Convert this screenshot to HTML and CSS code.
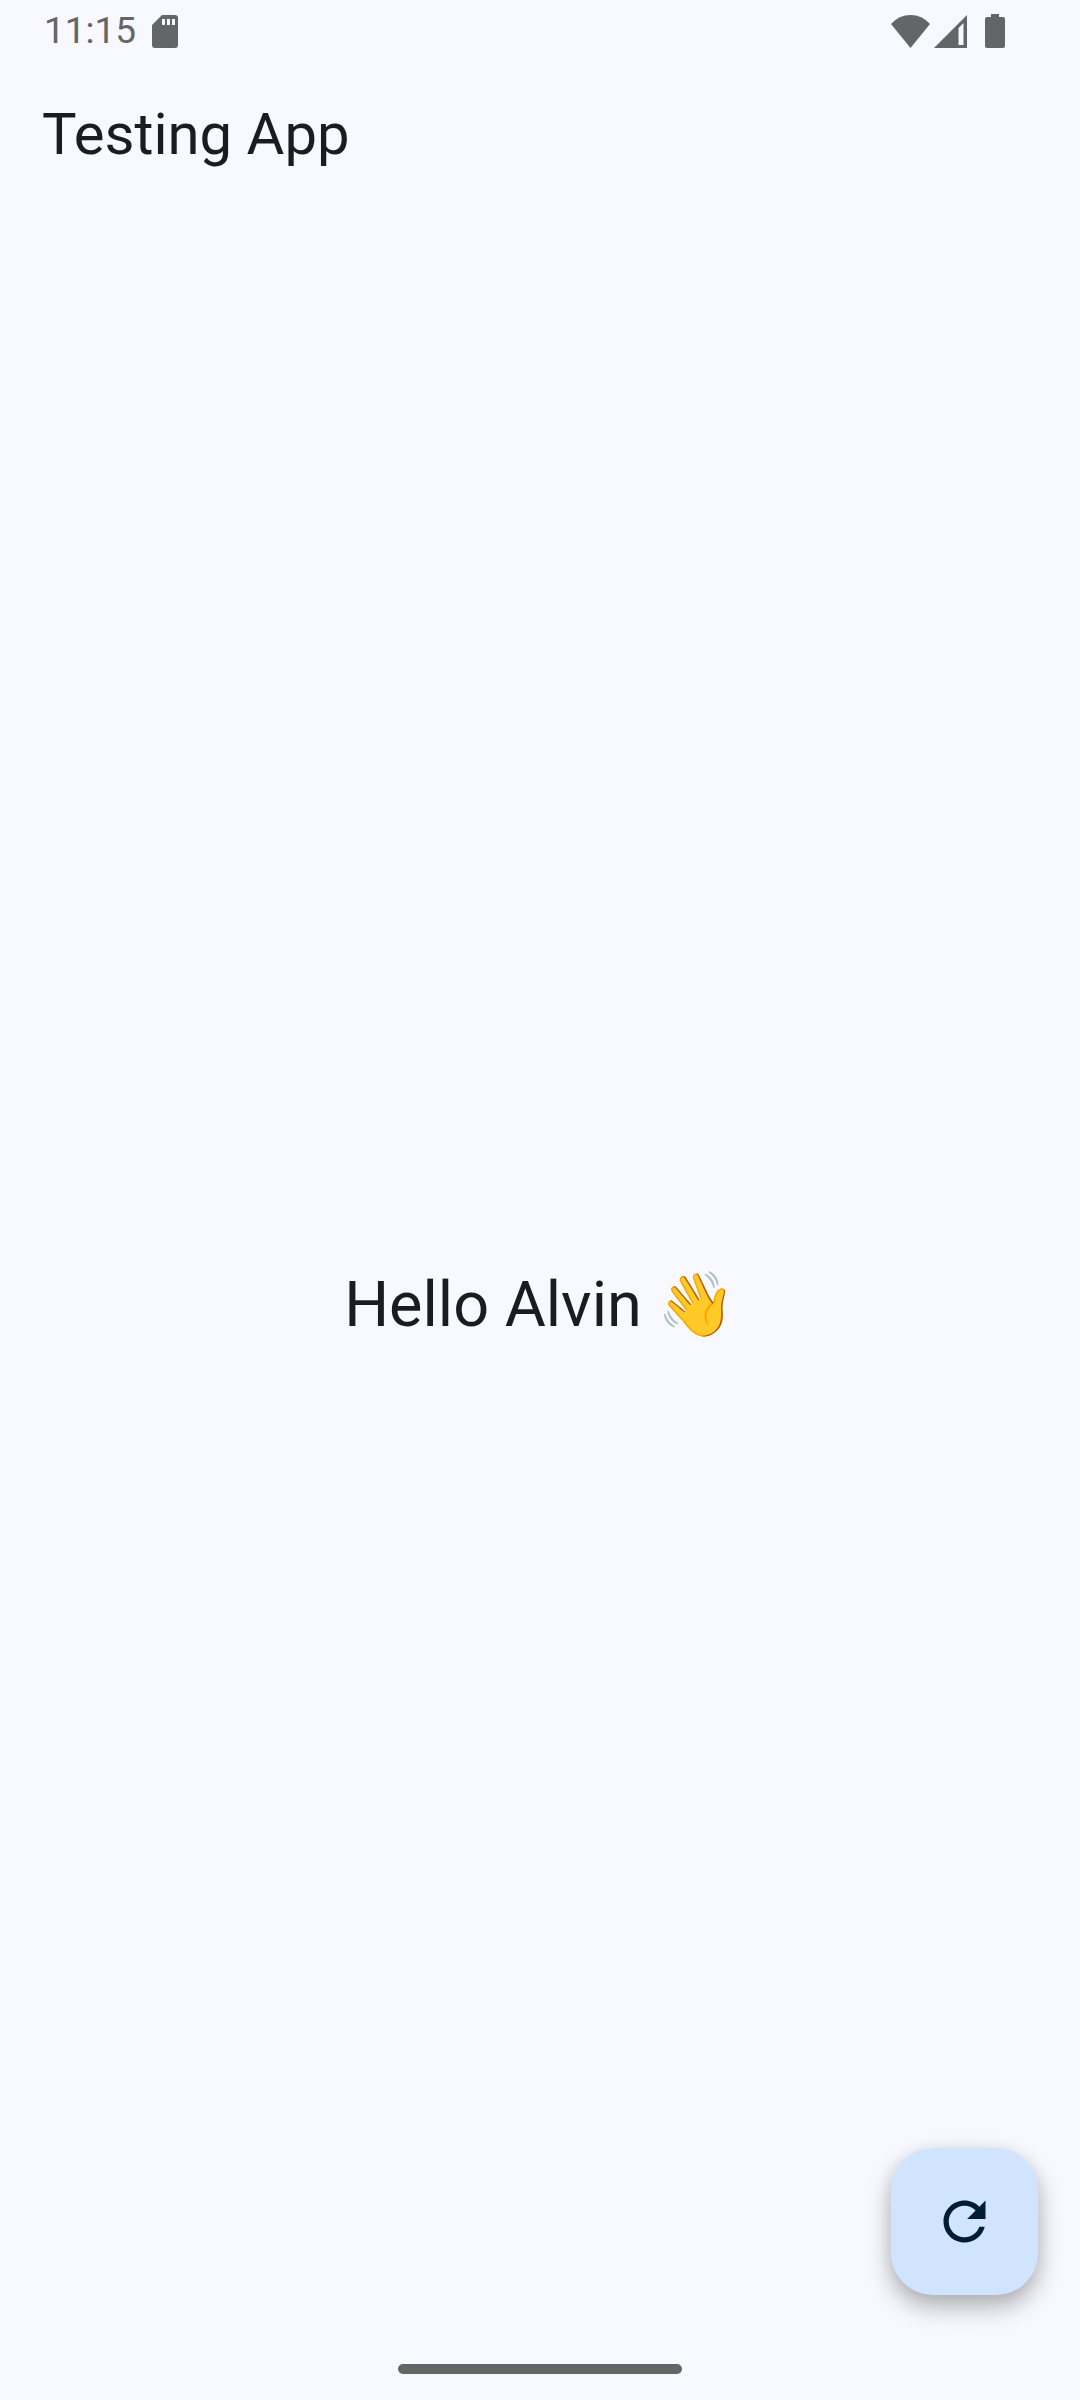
FILE: index.html
```html
<!DOCTYPE html>
<html lang="en">
<head>
<meta charset="utf-8">
<meta name="viewport" content="width=device-width, initial-scale=1">
<title>Testing App</title>
<link rel="stylesheet" href="styles.css">
</head>
<body class="screen">
  <div class="status-bar">
    <div class="status-group">
      <time class="clock">11:15</time>
      <svg class="icon-sd" viewBox="0 0 26 33" aria-hidden="true"><path fill-rule="evenodd" d="M10 0H23Q26 0 26 3V30Q26 33 23 33H3Q0 33 0 30V10ZM10 4V10H13V4ZM15 4V10H18V4ZM20 4V10H23V4Z"/></svg>
    </div>
    <div class="status-group status-right">
      <svg class="icon-wifi" viewBox="0 0 39 33" aria-hidden="true"><path d="M0 9Q8 0 19.500 0T39 9L19.500 33Z"/></svg>
      <svg class="icon-signal" viewBox="0 0 33 33" aria-hidden="true"><path fill-rule="evenodd" d="M0 33L33 0V33ZM24.500 13V30H29.500V8Z"/></svg>
      <svg class="icon-battery" viewBox="0 0 20 34" aria-hidden="true"><path d="M6 0H14V3H18Q20 3 20 5V32Q20 34 18 34H2Q0 34 0 32V5Q0 3 2 3H6Z"/></svg>
    </div>
  </div>
  <header class="app-bar">
    <h1 class="title">Testing App</h1>
  </header>
  <main class="content">
    <p class="greeting">Hello Alvin <span class="wave">👋</span></p>
  </main>
  <button class="fab" type="button" aria-label="Refresh">
    <svg class="icon-refresh" viewBox="0 0 24 24" aria-hidden="true"><path d="M17.650 6.350C16.200 4.900 14.210 4 12 4c-4.420 0-7.990 3.580-7.990 8s3.570 8 7.990 8c3.730 0 6.840-2.550 7.730-6h-2.080c-.82 2.330-3.040 4-5.650 4-3.310 0-6-2.690-6-6s2.690-6 6-6c1.660 0 3.140.69 4.220 1.780L13 11h7V4l-2.350 2.350z"/></svg>
  </button>
  <div class="gesture-bar"></div>
</body>
</html>
```
FILE: styles.css
```css
* {
  box-sizing: border-box;
}

.screen {
  margin: 0;
  min-height: 100vh;
  display: flex;
  flex-direction: column;
  background: #f8f9ff;
  color: #191c20;
  font-family: Roboto, "Noto Color Emoji", sans-serif;
}

.status-bar {
  height: 62px;
  padding: 0 75px 0 44px;
  display: flex;
  justify-content: space-between;
  align-items: center;
  color: #646566;
}

.status-bar svg {
  display: block;
  fill: currentColor;
}

.status-group {
  display: flex;
  align-items: center;
  gap: 16px;
}

.status-right {
  gap: 4px;
}

.clock {
  font-size: 37px;
  line-height: 62px;
}

.icon-sd {
  width: 26px;
  height: 33px;
}

.icon-wifi {
  width: 39px;
  height: 33px;
}

.icon-signal {
  width: 33px;
  height: 33px;
}

.icon-battery {
  width: 20px;
  height: 34px;
  margin-left: 14px;
}

.app-bar {
  height: 148px;
  padding: 0 42px 4px;
  display: flex;
  align-items: center;
}

.title {
  margin: 0;
  font-size: 58px;
  font-weight: 400;
  line-height: 74px;
}

.content {
  flex: 1;
  display: flex;
  align-items: center;
  justify-content: center;
}

.greeting {
  margin: 0;
  font-size: 63px;
  line-height: 74px;
}

.fab {
  position: fixed;
  right: 42px;
  bottom: 105px;
  width: 147px;
  height: 147px;
  padding: 0;
  display: grid;
  place-items: center;
  border: 0;
  border-radius: 42px;
  background: #d1e4ff;
  color: #001d36;
  box-shadow: 0 12px 24px rgba(0, 0, 0, 0.28), 0 2px 20px rgba(0, 0, 0, 0.08);
}

.icon-refresh {
  width: 63px;
  height: 63px;
  fill: currentColor;
}

.gesture-bar {
  position: fixed;
  bottom: 26px;
  left: 50%;
  width: 284px;
  height: 10px;
  border-radius: 5px;
  background: #646566;
  transform: translateX(-50%);
}
```
